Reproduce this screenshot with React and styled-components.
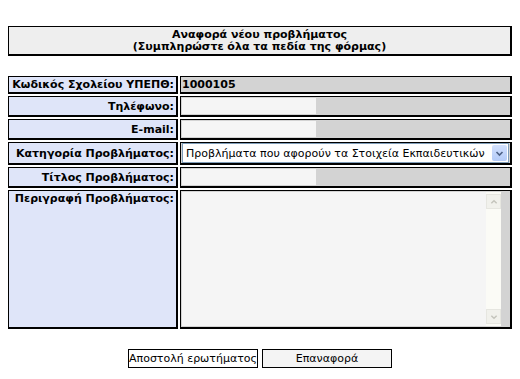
import React from 'react';
import styled, { createGlobalStyle } from 'styled-components';

const Global = createGlobalStyle`
  body{
    margin:8px;
    background:#fff;
    font-family:"DejaVu Sans", Verdana, sans-serif;
    font-size:11px;
    color:#000;
  }
`

const Page = styled.div`
  width:504px;
  padding-top:18px;
`

const Header = styled.div`
  background:#eeeeee;
  border:1px solid #000;
  border-right-width:2px;
  border-bottom-width:2px;
  height:27px;
  box-sizing:content-box;
  text-align:center;
  font-weight:bold;
  line-height:12px;
  display:flex;
  flex-direction:column;
  justify-content:center;
`

const Form = styled.form`
  margin-top:20px;
  display:grid;
  grid-template-columns:170px 1fr;
  gap:2px;
`

const Cell = styled.div`
  border:1px solid #000;
  border-right-width:2px;
  border-bottom-width:2px;
  height:${p=>p.$h}px;
  box-sizing:border-box;
  padding:0 2px;
  display:flex;
  align-items:${p=>p.$top?'flex-start':'center'};
  overflow:hidden;
`

const Label = styled(Cell)`
  background:#dfe5f9;
  font-weight:bold;
  justify-content:flex-end;
  white-space:nowrap;
  padding-top:${p=>p.$top?'1px':'0'};
`

const Value = styled(Cell)`
  background:#d3d3d3;
  font-weight:${p=>p.$bold?'bold':'normal'};
  padding:0 1px;
`

const Input = styled.input`
  width:134px;
  height:16px;
  box-sizing:border-box;
  border:none;
  background:#f5f5f5;
  margin:0;
  padding:0 2px;
  font:inherit;
`

const SelectBox = styled.div`
  position:relative;
  width:328px;
  height:20px;
  box-sizing:border-box;
  border:1px solid #7f9db9;
  background:#fff;
`

const Select = styled.select`
  appearance:none;
  width:100%;
  height:100%;
  border:none;
  background:transparent;
  font-family:"DejaVu Sans", Verdana, sans-serif;
  font-size:11px;
  padding:0 0 0 3px;
  margin:0;
  color:#000;
`

const Arrow = styled.span`
  position:absolute;
  right:1px;
  top:1px;
  width:15px;
  height:16px;
  background:linear-gradient(#d2e0fd,#b4cbf8);
  border-radius:2px;
  display:flex;
  align-items:center;
  justify-content:center;
  pointer-events:none;
`

const AreaBox = styled.div`
  display:flex;
  width:319px;
  height:134px;
  background:#f5f5f5;
  margin-top:1px;
`

const Area = styled.textarea`
  flex:1;
  border:none;
  background:#f5f5f5;
  resize:none;
  margin:0;
  padding:2px;
  font:inherit;
  overflow:hidden;
`

const Scroll = styled.div`
  width:15px;
  background:#fbfbf6;
  display:flex;
  flex-direction:column;
  justify-content:space-between;
  padding:2px 0;
`

const ScrollBtn = styled.span`
  height:15px;
  background:#f1f1ec;
  border:1px solid #e6e6e0;
  box-sizing:border-box;
  display:flex;
  align-items:center;
  justify-content:center;
`

const Buttons = styled.div`
  display:flex;
  justify-content:center;
  gap:4px;
  margin-top:20px;
`

const Button = styled.button`
  width:130px;
  height:19px;
  border:1px solid #000;
  background:${p=>p.$bg};
  font-family:"DejaVu Sans", Verdana, sans-serif;
  font-size:11px;
  padding:0;
  color:#000;
`

function Chevron({dir='down',color='#4d6185',size=9}){
  const d = dir==='down' ? 'M1.5 3 L4.5 6 L7.5 3' : 'M1.5 6 L4.5 3 L7.5 6'
  return (
    <svg width={size} height={size} viewBox="0 0 9 9">
      <path d={d} fill="none" stroke={color} strokeWidth="1.6"/>
    </svg>
  )
}

function App(){
  return (
    <Page>
      <Global/>
      <Header>
        <div>Αναφορά νέου προβλήματος</div>
        <div>(Συμπληρώστε όλα τα πεδία της φόρμας)</div>
      </Header>
      <Form onSubmit={e=>e.preventDefault()}>
        <Label $h={18}>Κωδικός Σχολείου ΥΠΕΠΘ:</Label>
        <Value $h={18} $bold>1000105</Value>

        <Label $h={21}>Τηλέφωνο:</Label>
        <Value $h={21}><Input type="text"/></Value>

        <Label $h={21}>E-mail:</Label>
        <Value $h={21}><Input type="text"/></Value>

        <Label $h={23}>Κατηγορία Προβλήματος:</Label>
        <Value $h={23}>
          <SelectBox>
            <Select defaultValue="1">
              <option value="1">Προβλήματα που αφορούν τα Στοιχεία Εκπαιδευτικών</option>
            </Select>
            <Arrow><Chevron/></Arrow>
          </SelectBox>
        </Value>

        <Label $h={21}>Τίτλος Προβλήματος:</Label>
        <Value $h={21}><Input type="text"/></Value>

        <Label $h={139} $top>Περιγραφή Προβλήματος:</Label>
        <Value $h={139} $top>
          <AreaBox>
            <Area/>
            <Scroll>
              <ScrollBtn><Chevron dir="up" color="#c4c4bc" size={8}/></ScrollBtn>
              <ScrollBtn><Chevron color="#c4c4bc" size={8}/></ScrollBtn>
            </Scroll>
          </AreaBox>
        </Value>
      </Form>
      <Buttons>
        <Button type="button" $bg="#fff">Αποστολή ερωτήματος</Button>
        <Button type="button" $bg="#f4f4f4">Επαναφορά</Button>
      </Buttons>
    </Page>
  )
}

export default App
